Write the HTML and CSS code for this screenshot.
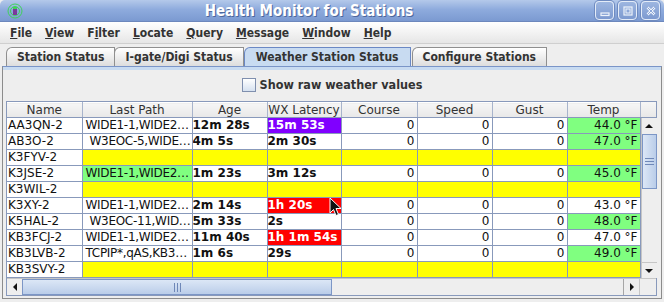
FILE: index.html
```html
<!DOCTYPE html>
<html lang="en">
<head>
    <meta charset="UTF-8">
    <title>Health Monitor for Stations</title>
    <link rel="stylesheet" href="styles.css">
</head>
<body>
    <div class="window">
        <div class="titlebar">
            <svg class="app-icon" width="16" height="16" viewBox="0 0 16 16">
                <circle cx="8" cy="8" r="7" fill="none" stroke="#3fd25a" stroke-width="1"/>
                <circle cx="8" cy="8" r="4.5" fill="none" stroke="#3fd25a" stroke-width="1"/>
                <rect x="6" y="4" width="4" height="8" fill="#7a3a9a"/>
                <rect x="6" y="4" width="4" height="2" fill="#3fd25a"/>
            </svg>
            <div class="title">Health Monitor for Stations</div>
            <div class="wbuttons">
                <span class="wbtn"><svg width="12" height="12" viewBox="0 0 12 12"><rect x="2" y="8" width="8" height="2.5" fill="none" stroke="#eef3fb" stroke-width="1.2"/></svg></span>
                <span class="wbtn"><svg width="12" height="12" viewBox="0 0 12 12"><rect x="2" y="2" width="8" height="8" fill="none" stroke="#eef3fb" stroke-width="1.2"/><rect x="4" y="4" width="4" height="4" fill="none" stroke="#eef3fb" stroke-width="1"/></svg></span>
                <span class="wbtn"><svg width="12" height="12" viewBox="0 0 12 12"><path d="M2.5 2.5 L9.5 9.5 M9.5 2.5 L2.5 9.5" stroke="#eef3fb" stroke-width="2.6"/><path d="M2.5 2.5 L9.5 9.5 M9.5 2.5 L2.5 9.5" stroke="#8aa6d8" stroke-width="1"/></svg></span>
            </div>
        </div>

        <div class="menubar">
            <span class="menu"><u>F</u>ile</span>
            <span class="menu"><u>V</u>iew</span>
            <span class="menu">F<u>i</u>lter</span>
            <span class="menu"><u>L</u>ocate</span>
            <span class="menu"><u>Q</u>uery</span>
            <span class="menu"><u>M</u>essage</span>
            <span class="menu"><u>W</u>indow</span>
            <span class="menu"><u>H</u>elp</span>
        </div>

        <div class="tabs">
            <span class="tab">Station Status</span>
            <span class="tab">I-gate/Digi Status</span>
            <span class="tab selected">Weather Station Status</span>
            <span class="tab">Configure Stations</span>
        </div>

        <div class="panel">
            <div class="options">
                <label class="check"><span class="box"></span>Show raw weather values</label>
            </div>

            <div class="scrollpane">
                <div class="head-row">
                    <table class="grid head">
                        <colgroup>
                            <col class="c-name"><col class="c-path"><col class="c-age"><col class="c-lat">
                            <col class="c-num"><col class="c-num2"><col class="c-num2"><col class="c-temp">
                        </colgroup>
                        <tr>
                            <th>Name</th><th>Last Path</th><th>Age</th><th>WX Latency</th>
                            <th>Course</th><th>Speed</th><th>Gust</th><th>Temp</th>
                        </tr>
                    </table>
                    <div class="head-corner"></div>
                </div>

                <div class="body-row">
                    <table class="grid body">
                        <colgroup>
                            <col class="c-name"><col class="c-path"><col class="c-age"><col class="c-lat">
                            <col class="c-num"><col class="c-num2"><col class="c-num2"><col class="c-temp">
                        </colgroup>
                        <tr>
                            <td>AA3QN-2</td><td class="path">WIDE1-1,WIDE2…</td><td class="b">12m 28s</td><td class="b purple">15m 53s</td>
                            <td class="n">0</td><td class="n">0</td><td class="n">0</td><td class="n green">44.0 °F</td>
                        </tr>
                        <tr>
                            <td>AB3O-2</td><td class="path ind">W3EOC-5,WIDE…</td><td class="b">4m 5s</td><td class="b">2m 30s</td>
                            <td class="n">0</td><td class="n">0</td><td class="n">0</td><td class="n green">47.0 °F</td>
                        </tr>
                        <tr class="missing">
                            <td>K3FYV-2</td><td></td><td></td><td></td><td></td><td></td><td></td><td></td>
                        </tr>
                        <tr>
                            <td>K3JSE-2</td><td class="path green">WIDE1-1,WIDE2…</td><td class="b">1m 23s</td><td class="b">3m 12s</td>
                            <td class="n">0</td><td class="n">0</td><td class="n">0</td><td class="n green">45.0 °F</td>
                        </tr>
                        <tr class="missing">
                            <td>K3WIL-2</td><td></td><td></td><td></td><td></td><td></td><td></td><td></td>
                        </tr>
                        <tr>
                            <td>K3XY-2</td><td class="path">WIDE1-1,WIDE2…</td><td class="b">2m 14s</td><td class="b red">1h 20s</td>
                            <td class="n">0</td><td class="n">0</td><td class="n">0</td><td class="n">43.0 °F</td>
                        </tr>
                        <tr>
                            <td>K5HAL-2</td><td class="path ind">W3EOC-11,WID…</td><td class="b">5m 33s</td><td class="b">2s</td>
                            <td class="n">0</td><td class="n">0</td><td class="n">0</td><td class="n green">48.0 °F</td>
                        </tr>
                        <tr>
                            <td>KB3FCJ-2</td><td class="path">WIDE1-1,WIDE2…</td><td class="b">11m 40s</td><td class="b red">1h 1m 54s</td>
                            <td class="n">0</td><td class="n">0</td><td class="n">0</td><td class="n">47.0 °F</td>
                        </tr>
                        <tr>
                            <td>KB3LVB-2</td><td class="path">TCPIP*,qAS,KB3…</td><td class="b">1m 6s</td><td class="b">29s</td>
                            <td class="n">0</td><td class="n">0</td><td class="n">0</td><td class="n green">49.0 °F</td>
                        </tr>
                        <tr class="missing">
                            <td>KB3SVY-2</td><td></td><td></td><td></td><td></td><td></td><td></td><td></td>
                        </tr>
                    </table>

                    <div class="vscroll">
                        <span class="arrow up"></span>
                        <div class="vtrack">
                            <span class="vthumb"><span class="grip-h"></span></span>
                        </div>
                        <span class="arrow down"></span>
                    </div>
                </div>

                <div class="hscroll-row">
                    <div class="hscroll">
                        <span class="arrow left"></span>
                        <div class="htrack">
                            <span class="hthumb"><span class="grip-v"></span></span>
                        </div>
                        <span class="arrow right"></span>
                    </div>
                    <div class="corner"></div>
                </div>
            </div>
        </div>

        <svg class="cursor" width="13" height="20" viewBox="0 0 13 20">
            <path d="M1 1 L1 16 L4.5 12.5 L7 18.5 L9.5 17.5 L7 11.5 L12 11.5 Z" fill="#111" stroke="#fff" stroke-width="1"/>
        </svg>
    </div>
</body>
</html>
```

FILE: styles.css
```css
body { margin: 0; background: #eeeeee; font-family: "DejaVu Sans", sans-serif; font-size: 12px; color: #222; }
.window { position: relative; width: 664px; height: 302px; background: #eeeeee; overflow: hidden; }

.titlebar { height: 22px; display: flex; align-items: center; background: linear-gradient(#b4c9ea, #8eabdd 45%, #7b9ad1); border-bottom: 1px solid #6d88bd; box-sizing: border-box; border-radius: 5px 5px 0 0; padding: 0 4px 0 7px; }
.app-icon { flex: none; }
.title { flex: 1; text-align: center; color: #fff; font-family: "DejaVu Sans Condensed", "DejaVu Sans", sans-serif; font-weight: bold; font-size: 15px; text-shadow: 1px 1px 0 #4d679c; }
.wbuttons { display: flex; gap: 4px; }
.wbtn { width: 17px; height: 17px; display: flex; align-items: center; justify-content: center; border: 1px solid #e4ecf8; border-radius: 4px; background: linear-gradient(#9db6e0, #7d9ad0); box-shadow: 0 0 0 1px #6f8bc0; }

.menubar { height: 22px; display: flex; align-items: center; padding-left: 4px; background: linear-gradient(#ffffff, #e6e6e6); border-bottom: 1px solid #cfcfcf; box-sizing: border-box; }
.menu { padding: 0 6px; margin-right: 1px; font-family: "DejaVu Sans Condensed", "DejaVu Sans", sans-serif; font-weight: bold; font-size: 12px; color: #333; }

.tabs { height: 22px; display: flex; align-items: flex-end; padding-left: 6px; }
.tab { height: 19px; box-sizing: border-box; padding: 1px 10px 0 10px; font-family: "DejaVu Sans Condensed", "DejaVu Sans", sans-serif; font-weight: bold; font-size: 12px; color: #333; line-height: 17px; border: 1px solid #8f8f8f; border-bottom: none; border-radius: 6px 0 0 0; background: linear-gradient(#ffffff, #dddddd); margin-right: -1px; }
.tab.selected { background: #c8dbf1; border-color: #6a88c4; position: relative; z-index: 1; margin: 0 1px 0 1px; padding: 1px 11px 0 11px; }

.panel { margin-left: 2px; width: 660px; height: 233px; box-sizing: border-box; border: 1px solid #8c8c8c; border-top: 1px solid #7a95c8; padding: 0 3px; box-shadow: inset 0 3px 0 #c8dbf1; }
.options { height: 34px; padding-top: 1px; box-sizing: border-box; display: flex; align-items: center; justify-content: center; }
.check { display: flex; align-items: center; gap: 4px; font-family: "DejaVu Sans Condensed", "DejaVu Sans", sans-serif; font-weight: bold; font-size: 12.5px; color: #333; }
.box { width: 12px; height: 12px; border: 1px solid #7f8fae; background: linear-gradient(#ffffff, #d6e1f0); }

.scrollpane { width: 651px; border: 1px solid #8899bb; box-sizing: border-box; background: #eeeeee; }
.head-row, .body-row, .hscroll-row { display: flex; }

.grid { border-collapse: collapse; table-layout: fixed; width: 633px; }
.c-name { width: 75px; }
.c-path { width: 110px; }
.c-age { width: 75px; }
.c-lat { width: 74px; }
.c-num { width: 76px; }
.c-num2 { width: 75px; }
.c-temp { width: 73px; }

.head th { height: 14px; padding: 0; font-weight: normal; font-size: 12px; color: #333; line-height: 14px; background: linear-gradient(#f6f6f6, #e8e8e8); border-right: 1px solid #a8b4cc; border-bottom: 1px solid #8899bb; border-top: 1px solid #fff; overflow: hidden; white-space: nowrap; }
.head-corner { width: 16px; background: linear-gradient(#f6f6f6, #e8e8e8); border-bottom: 1px solid #8899bb; }

.body td { height: 15px; padding: 0 1px; line-height: 15px; background: #fff; border-right: 1px solid #8899bb; border-bottom: 1px solid #8899bb; white-space: nowrap; overflow: hidden; color: #111; }
.body td.path { padding-left: 3px; letter-spacing: -0.3px; }
.body td.ind { padding-left: 7px; }
.body td.b { font-weight: bold; padding-left: 0; }
.body td.n { text-align: right; padding-right: 2px; }
.body .missing td + td { background: #ffff00; }
.body td.green { background: #80ff80; }
.body td.purple { background: #8000ff; color: #fff; }
.body td.red { background: #ff0000; color: #fff; }

.vscroll { width: 16px; display: flex; flex-direction: column; background: #eeeeee; border-left: 1px solid #c6c6c6; box-sizing: border-box; }
.vtrack { flex: 1; }
.vthumb { display: flex; align-items: center; justify-content: center; height: 55px; box-sizing: border-box; border: 1px solid #7c96c6; background: linear-gradient(90deg, #dce7f6, #bacde9); }
.grip-h { width: 9px; height: 5px; border-top: 1px solid #6f88b8; border-bottom: 1px solid #6f88b8; position: relative; }
.grip-h::after { content: ""; position: absolute; left: 0; right: 0; top: 2px; border-top: 1px solid #6f88b8; }

.arrow { display: flex; align-items: center; justify-content: center; flex: none; width: 15px; height: 16px; background: #eeeeee; }
.arrow::before { content: ""; width: 0; height: 0; border: 4px solid transparent; }
.arrow.up::before { border-bottom: 4px solid #111; border-top: 0; }
.arrow.down::before { border-top: 4px solid #111; border-bottom: 0; }
.arrow.left::before { border-right: 4px solid #111; border-left: 0; }
.arrow.right::before { border-left: 4px solid #111; border-right: 0; }
.arrow.down { border-top: 1px solid #c6c6c6; height: 15px; }

.hscroll { width: 633px; height: 17px; display: flex; border-top: 1px solid #c6c6c6; box-sizing: border-box; }
.hscroll .arrow { height: 16px; }
.arrow.right { border-left: 1px solid #a6a6a6; }
.htrack { flex: 1; display: flex; }
.hthumb { width: 310px; display: flex; align-items: center; justify-content: center; box-sizing: border-box; border: 1px solid #7c96c6; background: linear-gradient(#dce7f6, #bacde9); }
.grip-v { width: 5px; height: 9px; border-left: 1px solid #6f88b8; border-right: 1px solid #6f88b8; position: relative; }
.grip-v::after { content: ""; position: absolute; top: 0; bottom: 0; left: 2px; border-left: 1px solid #6f88b8; }
.corner { width: 16px; border-left: 1px solid #c6c6c6; border-top: 1px solid #c6c6c6; }

.cursor { position: absolute; left: 329px; top: 197px; }
```
